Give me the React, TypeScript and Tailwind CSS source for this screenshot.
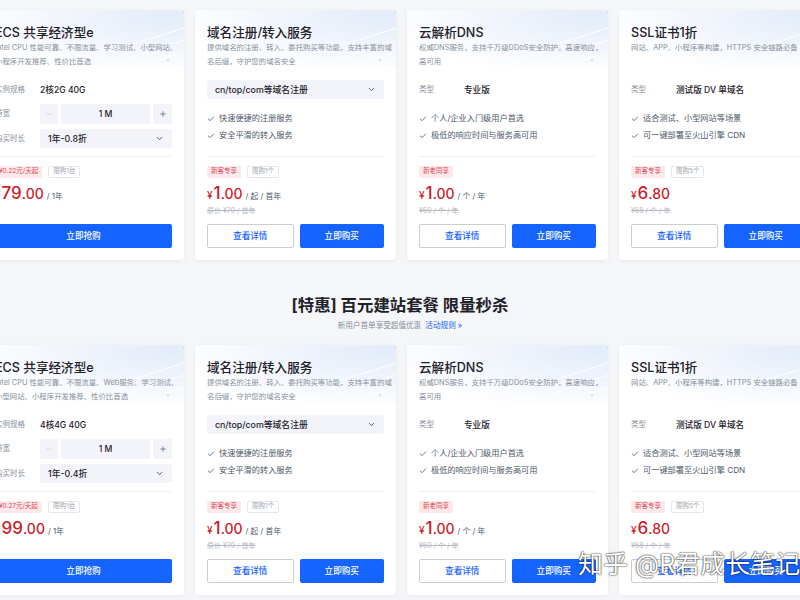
import { Check, ChevronDown, Minus, Plus } from "lucide-react";

type Product = {
    kind: "ecs" | "domain" | "plain";
    title: string;
    desc: string[];
    spec?: string;
    duration?: string;
    select?: string;
    checks?: string[];
    tags: { text: string; red?: boolean }[];
    int: string;
    dec: string;
    unit?: string;
    strike?: string;
};

const font = "font-['Inter','Noto_Sans_CJK_SC',sans-serif]";

const row = (ecsDesc: string[], spec: string, duration: string, perDay: string, int: string): Product[] => [
    {
        kind: "ecs",
        title: "ECS 共享经济型e",
        desc: ecsDesc,
        spec,
        duration,
        tags: [{ text: perDay, red: true }, { text: "限购1台" }],
        int,
        dec: ".00",
        unit: "/ 1年",
    },
    {
        kind: "domain",
        title: "域名注册/转入服务",
        desc: ["提供域名的注册、转入、委托购买等功能，支持丰富的域", "名后缀，守护您的域名安全"],
        select: "cn/top/com等域名注册",
        checks: ["快速便捷的注册服务", "安全平滑的转入服务"],
        tags: [{ text: "新客专享", red: true }, { text: "限购1个" }],
        int: "1",
        dec: ".00",
        unit: "/ 起 / 首年",
        strike: "原价 ¥70 / 首年",
    },
    {
        kind: "plain",
        title: "云解析DNS",
        desc: ["权威DNS服务，支持千万级DDoS安全防护，高速响应，", "高可用"],
        spec: "专业版",
        checks: ["个人/企业入门级用户首选", "极低的响应时间与服务高可用"],
        tags: [{ text: "新老同享", red: true }],
        int: "1",
        dec: ".00",
        unit: "/ 个 / 年",
        strike: "¥60 / 个 / 年",
    },
    {
        kind: "plain",
        title: "SSL证书1折",
        desc: ["网站、APP、小程序等构建，HTTPS 安全链路必备"],
        spec: "测试版 DV 单域名",
        checks: ["适合测试、小型网站等场景", "可一键部署至火山引擎 CDN"],
        tags: [{ text: "新客专享", red: true }, { text: "限购5个" }],
        int: "6",
        dec: ".80",
        strike: "¥68 / 个 / 年",
    },
];

const rowOne = row(
    ["Intel CPU 性能可靠、不限流量、学习测试、小型网站、", "小程序开发推荐、性价比首选"],
    "2核2G 40G",
    "1年-0.8折",
    "¥0.22元/天起",
    "79"
);
const rowTwo = row(
    ["Intel CPU 性能可靠、不限流量、Web服务、学习测试、", "小型网站、小程序开发推荐、性价比首选"],
    "4核4G 40G",
    "1年-0.4折",
    "¥0.27元/天起",
    "99"
);

const Label = ({ children }: { children: string }) => (
    <span className="w-[45px] shrink-0 whitespace-nowrap text-[7.5px] text-[#86909c]">{children}</span>
);

const Checks = ({ items }: { items: string[] }) => (
    <div className="flex flex-col">
        {items.map((c) => (
            <div key={c} className="flex h-[17px] items-center gap-[4px] text-[8.2px] text-[#4e5969]">
                <Check size={8} strokeWidth={2.5} className="text-[#3d5a88]" />
                <span className="whitespace-nowrap">{c}</span>
            </div>
        ))}
    </div>
);

const SelectBox = ({ text }: { text: string }) => (
    <div className="flex h-full flex-1 items-center justify-between rounded-[2px] bg-[#f2f4f9] px-[8px]">
        <span className="whitespace-nowrap text-[8.8px] font-medium text-[#1d2129]">{text}</span>
        <ChevronDown size={9} strokeWidth={2.5} className="text-[#4e5969]" />
    </div>
);

const Middle = ({ p }: { p: Product }) => {
    if (p.kind === "ecs") {
        return (
            <div className="flex h-[87px] flex-col pt-[13px]">
                <div className="flex h-[16px] items-center">
                    <Label>实例规格</Label>
                    <span className="whitespace-nowrap text-[8.6px] font-medium text-[#1d2129]">{p.spec}</span>
                </div>
                <div className="mt-[6px] flex h-[20px] items-center">
                    <Label>带宽</Label>
                    <div className="flex h-full flex-1 gap-[3px]">
                        <div className="flex w-[18px] items-center justify-center bg-[#f2f4f9] text-[#c9cdd4]">
                            <Minus size={8} />
                        </div>
                        <div className="flex flex-1 items-center justify-center bg-[#f2f4f9] text-[8.6px] font-medium text-[#1d2129]">
                            1 M
                        </div>
                        <div className="flex w-[19px] items-center justify-center bg-[#f2f4f9] text-[#4e5969]">
                            <Plus size={8} />
                        </div>
                    </div>
                </div>
                <div className="mt-[5px] flex h-[19px] items-center">
                    <Label>购买时长</Label>
                    <SelectBox text={p.duration ?? ""} />
                </div>
            </div>
        );
    }
    if (p.kind === "domain") {
        return (
            <div className="flex h-[87px] flex-col pt-[11px]">
                <div className="flex h-[19px]">
                    <SelectBox text={p.select ?? ""} />
                </div>
                <div className="mt-[11px]">
                    <Checks items={p.checks ?? []} />
                </div>
            </div>
        );
    }
    return (
        <div className="flex h-[87px] flex-col pt-[13px]">
            <div className="flex h-[16px] items-center">
                <Label>类型</Label>
                <span className="whitespace-nowrap text-[8.6px] font-medium text-[#1d2129]">{p.spec}</span>
            </div>
            <div className="mt-[12px]">
                <Checks items={p.checks ?? []} />
            </div>
        </div>
    );
};

const Card = ({ p }: { p: Product }) => (
    <div className="relative flex h-[250px] w-[201px] shrink-0 flex-col overflow-hidden rounded-[4px] bg-white shadow-[0_1px_4px_rgba(30,40,70,0.06)]">
        <div className="absolute right-0 top-[1px] flex h-[10px] w-[40px] items-center justify-center rounded-tl-[7px] rounded-bl-[2px] bg-linear-to-r from-[#37c0f2] to-[#1a84f4] text-[6.3px] text-white">
            个企同享
        </div>
        <div className="relative h-[59px] bg-[radial-gradient(ellipse_at_95%_10%,#e3ecf9_0%,#f1f5fc_40%,#ffffff_80%)] px-3 pt-[15px]">
            <svg className="pointer-events-none absolute right-0 top-0" width="90" height="59" viewBox="0 0 90 59">
                <g stroke="#ffffff" strokeWidth="1.2" opacity="0.8">
                    <line x1="20" y1="40" x2="90" y2="18" />
                    <line x1="35" y1="48" x2="90" y2="30" />
                    <line x1="50" y1="55" x2="90" y2="42" />
                </g>
                <circle cx="74" cy="50" r="1.5" fill="#dbe5f4" />
            </svg>
            <div className="relative h-[16px] whitespace-nowrap text-[12.6px] font-medium leading-[16px] text-[#1d2129]">
                {p.title}
            </div>
            {p.desc.map((d) => (
                <div key={d} className="relative whitespace-nowrap text-[7.4px] leading-[14px] text-[#86909c]">
                    {d}
                </div>
            ))}
        </div>
        <div className="flex flex-1 flex-col px-3">
            <Middle p={p} />
            <div className="border-t border-[#eef0f4] pt-[9px]">
                <div className="flex h-[12px] gap-[6px]">
                    {p.tags.map((t) =>
                        t.red ? (
                            <span
                                key={t.text}
                                className="flex items-center rounded-[2px] bg-[#fde8ea] px-[4px] text-[6.5px] text-[#e04a56]"
                            >
                                {t.text}
                            </span>
                        ) : (
                            <span
                                key={t.text}
                                className="flex items-center rounded-[2px] border border-[#e5e6eb] px-[4px] text-[6.5px] text-[#a0a6b0]"
                            >
                                {t.text}
                            </span>
                        )
                    )}
                </div>
                <div className="mt-[5px] flex h-[20px] items-baseline gap-[3px] text-[#cc1c2c]">
                    <span className="flex items-baseline">
                        <span className="mr-[1px] text-[10px] font-medium">¥</span>
                        <span className="text-[17px] font-medium leading-[20px]">{p.int}</span>
                        <span className="text-[14px] font-medium">{p.dec}</span>
                    </span>
                    {p.unit && <span className="text-[7.8px] text-[#4e5969]">{p.unit}</span>}
                </div>
                <div className="mt-[2px] h-[12px] text-[7px] leading-[12px] text-[#b5bac3] line-through">
                    {p.strike}
                </div>
                {p.kind === "ecs" ? (
                    <div className="mt-[7px] flex h-[24px] items-center justify-center rounded-[2px] bg-[#1664ff] text-[8.6px] font-medium text-white">
                        立即抢购
                    </div>
                ) : (
                    <div className="mt-[7px] flex h-[24px] gap-[6px]">
                        <div className="flex flex-1 items-center justify-center rounded-[2px] border border-[#c9cdd4] bg-white text-[8.6px] font-medium text-[#1664ff]">
                            查看详情
                        </div>
                        <div className="flex flex-1 items-center justify-center rounded-[2px] bg-[#1664ff] text-[8.6px] font-medium text-white">
                            立即购买
                        </div>
                    </div>
                )}
            </div>
        </div>
    </div>
);

const Row = ({ items }: { items: Product[] }) => (
    <div className="-ml-[17px] flex gap-[11px]">
        {items.map((p) => (
            <Card key={p.title} p={p} />
        ))}
    </div>
);

export default function App() {
    return (
        <div className={`relative h-[600px] w-[800px] overflow-hidden bg-[#f5f6f8] pt-[10px] ${font}`}>
            <Row items={rowOne} />
            <div className="flex h-[85px] flex-col items-center pt-[35px]">
                <div className="text-[16.4px] font-bold leading-[20px] text-[#1d2129]">
                    [特惠] 百元建站套餐 限量秒杀
                </div>
                <div className="mt-[5px] text-[7.6px] leading-[12px] text-[#86909c]">
                    新用户首单享受超值优惠 <span className="ml-[2px] text-[#1664ff]">活动规则 »</span>
                </div>
            </div>
            <Row items={rowTwo} />
            <div className="absolute left-[578px] top-[549px] whitespace-nowrap text-[25px] leading-[30px] text-white [text-shadow:0_0_2px_rgba(0,0,0,0.75),0_0_1px_rgba(0,0,0,0.9)]">
                知乎 @R君成长笔记
            </div>
        </div>
    );
}
